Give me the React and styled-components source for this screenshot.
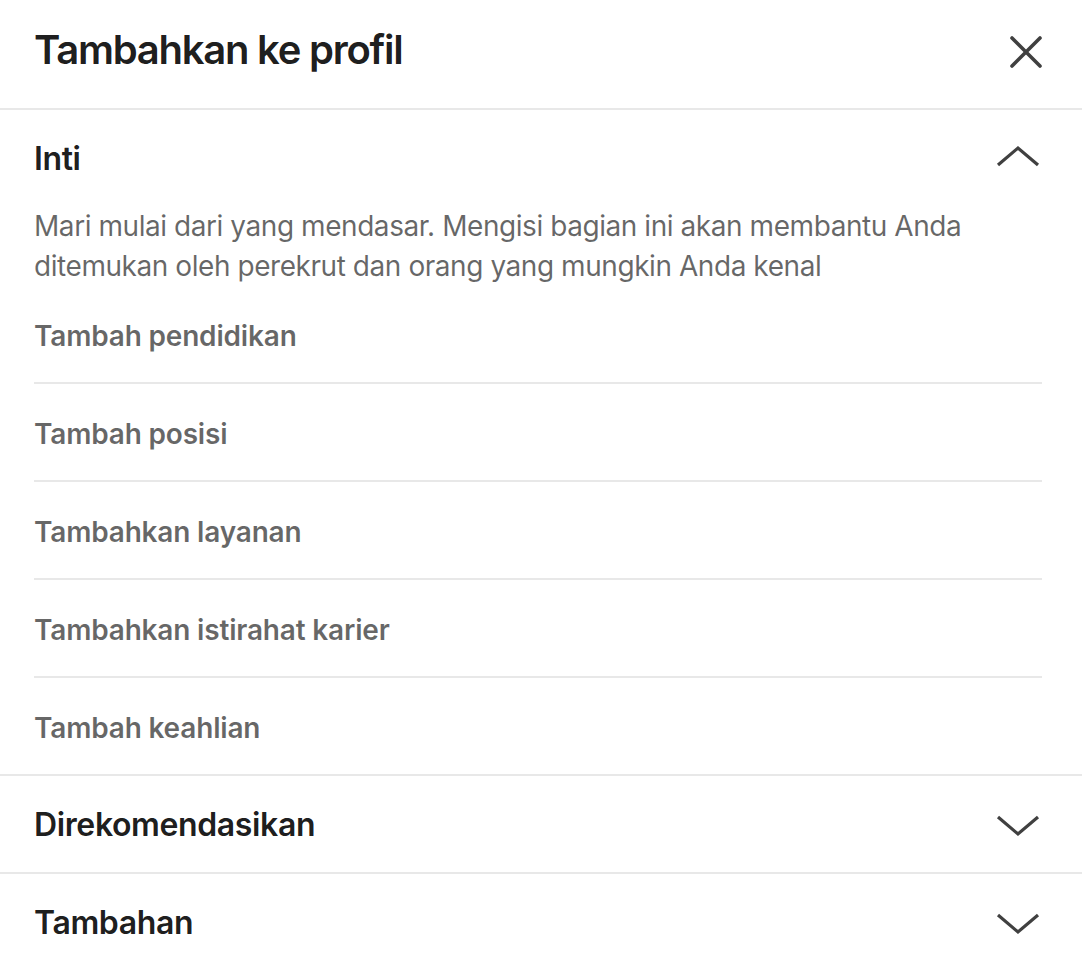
import React from 'react'
import styled, { createGlobalStyle } from 'styled-components'

const GlobalStyle = createGlobalStyle`
  * { box-sizing: border-box; }
  body {
    margin: 0;
    background: #fff;
    font-family: Inter, "Noto Sans", sans-serif;
    -webkit-font-smoothing: antialiased;
  }
`

const sections = [
  {
    title: 'Inti',
    open: true,
    text: 'Mari mulai dari yang mendasar. Mengisi bagian ini akan membantu Anda ditemukan oleh perekrut dan orang yang mungkin Anda kenal',
    items: [
      'Tambah pendidikan',
      'Tambah posisi',
      'Tambahkan layanan',
      'Tambahkan istirahat karier',
      'Tambah keahlian',
    ],
  },
  { title: 'Direkomendasikan', open: false },
  { title: 'Tambahan', open: false },
]

const CloseIcon = () => (
  <svg width="34" height="34" viewBox="0 0 34 34" fill="none">
    <path d="M3 3 L31 31 M31 3 L3 31" stroke="currentColor" strokeWidth="3.6" strokeLinecap="round" />
  </svg>
)

const Chevron = ({ up }) => (
  <svg width="48" height="48" viewBox="0 0 48 48" fill="none">
    <polyline
      points={up ? '4,31 24,14 44,31' : '4,17 24,34 44,17'}
      stroke="currentColor"
      strokeWidth="3.2"
      strokeLinejoin="miter"
    />
  </svg>
)

const App = () => {
  return (
    <Modal>
      <GlobalStyle />
      <Header>
        <Title>Tambahkan ke profil</Title>
        <CloseButton aria-label="Tutup">
          <CloseIcon />
        </CloseButton>
      </Header>

      {sections.map(s => (
        <Section key={s.title}>
          <SectionHeader>
            <SectionTitle>{s.title}</SectionTitle>
            <IconWrap>
              <Chevron up={s.open} />
            </IconWrap>
          </SectionHeader>
          {s.open && (
            <>
              <Description>{s.text}</Description>
              <ItemList>
                {s.items.map(item => (
                  <Item key={item}>
                    <ItemLink>{item}</ItemLink>
                  </Item>
                ))}
              </ItemList>
            </>
          )}
        </Section>
      ))}
    </Modal>
  )
}

const Modal = styled.div`
  width: 1082px;
  background: #fff;
`

const Header = styled.header`
  height: 110px;
  display: flex;
  align-items: center;
  justify-content: space-between;
  padding: 0 39px 10px 34px;
  border-bottom: 2px solid #e8e8e8;
`

const Title = styled.h2`
  margin: 0;
  font-size: 40px;
  font-weight: 600;
  letter-spacing: -1.25px;
  color: rgba(0, 0, 0, 0.9);
`

const CloseButton = styled.button`
  display: flex;
  padding: 0;
  margin-top: 5px;
  border: none;
  background: none;
  color: #404040;
  cursor: pointer;
`

const Section = styled.section`
  border-bottom: 2px solid #e8e8e8;
`

const SectionHeader = styled.div`
  height: 96px;
  display: flex;
  align-items: center;
  justify-content: space-between;
  padding: 0 40px 0 34px;
`

const SectionTitle = styled.h3`
  margin: 0;
  font-size: 32px;
  font-weight: 600;
  letter-spacing: -0.38px;
  color: rgba(0, 0, 0, 0.9);
`

const IconWrap = styled.span`
  display: flex;
  color: #404040;
`

const Description = styled.p`
  margin: 0;
  padding: 0 40px 0 34px;
  font-size: 28px;
  line-height: 40px;
  letter-spacing: -0.44px;
  color: rgba(0, 0, 0, 0.6);
`

const ItemList = styled.ul`
  list-style: none;
  margin: 0;
  padding: 0 40px 0 34px;
`

const Item = styled.li`
  border-bottom: 2px solid #e8e8e8;
  &:last-child {
    border-bottom: none;
  }
`

const ItemLink = styled.button`
  width: 100%;
  height: 96px;
  display: flex;
  align-items: center;
  padding: 4px 0 0;
  border: none;
  background: none;
  font-family: inherit;
  font-size: 28px;
  font-weight: 600;
  letter-spacing: -0.18px;
  color: rgba(0, 0, 0, 0.6);
  text-align: left;
  cursor: pointer;
`

export default App
